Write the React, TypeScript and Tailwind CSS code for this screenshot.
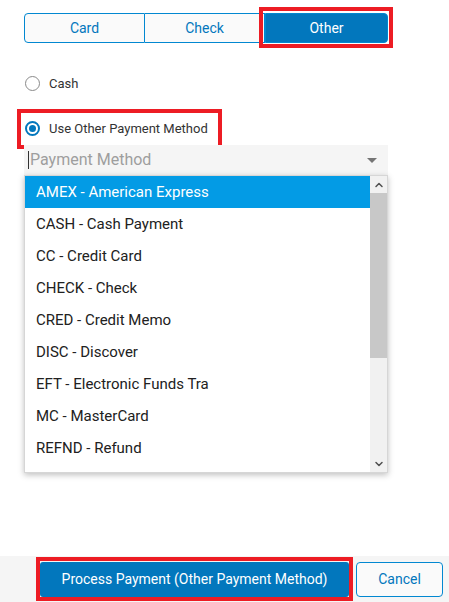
import { ChevronUp, ChevronDown } from 'lucide-react'

const methods = [
  'AMEX - American Express',
  'CASH - Cash Payment',
  'CC - Credit Card',
  'CHECK - Check',
  'CRED - Credit Memo',
  'DISC - Discover',
  'EFT - Electronic Funds Tra',
  'MC - MasterCard',
  'REFND - Refund',
  'TRANS - Transfer of Funds',
]

function Radio({ checked, label }: { checked?: boolean; label: string }) {
  return (
    <div className="flex items-center gap-[9px]">
      <span
        className={
          checked
            ? 'flex h-[15px] w-[15px] items-center justify-center rounded-full border-2 border-[#0277bd]'
            : 'h-[15px] w-[15px] rounded-full border-[1.5px] border-[#8a8a8a]'
        }
      >
        {checked && <span className="h-[7px] w-[7px] rounded-full bg-[#0277bd]" />}
      </span>
      <span className="text-[13px] text-[#333]">{label}</span>
    </div>
  )
}

export default function App() {
  return (
    <div className="flex min-h-[602px] flex-col bg-white font-['Roboto',sans-serif]">
      <main className="pl-[24px] pr-[61px] pt-[13px]">
        <div className="flex h-[30px]">
          <button className="w-[121px] rounded-l-[4px] border border-[#0288d1] bg-[#fafafa] text-[14px] text-[#0277bd]">
            Card
          </button>
          <button className="w-[120px] border-y border-r border-[#0288d1] bg-[#fafafa] text-[14px] text-[#0277bd]">
            Check
          </button>
          <div className="relative flex-1">
            <button className="h-full w-full rounded-r-[4px] border border-[#0288d1] bg-[#0277bd] text-[14px] text-white">
              Other
            </button>
            <div className="pointer-events-none absolute -bottom-[5px] -left-[6px] -right-[5px] -top-[6px] border-4 border-[#ed1c24]" />
          </div>
        </div>

        <div className="mt-[31px] flex flex-col gap-[25px] pl-[1px]">
          <Radio label="Cash" />
          <div className="relative w-fit pr-[10px]">
            <Radio checked label="Use Other Payment Method" />
            <div className="pointer-events-none absolute -bottom-[11px] -left-[8px] -right-[4px] -top-[10px] border-4 border-[#ed1c24]" />
          </div>
        </div>

        <div className="relative mt-[7px]">
          <div className="flex h-[30px] items-center justify-between bg-[#f5f5f5] pl-[4px] pr-[11px]">
            <span className="flex items-center text-[16px] text-[#9e9e9e]">
              <span className="mr-[1px] h-[18px] w-px bg-[#333]" />
              Payment Method
            </span>
            <span className="h-0 w-0 border-x-[5px] border-t-[5px] border-x-transparent border-t-[#757575]" />
          </div>

          <div className="absolute left-0 right-0 top-[30px] z-10 flex h-[298px] border border-[#d6d6d6] bg-white shadow-[0_2px_6px_rgba(0,0,0,0.25)]">
            <ul className="flex-1 overflow-hidden">
              {methods.map((m, i) => (
                <li
                  key={m}
                  className={
                    i === 0
                      ? 'flex h-[32px] shrink-0 items-center bg-[#039be5] pl-[11px] text-[15px] text-white'
                      : 'flex h-[32px] shrink-0 items-center pl-[11px] text-[15px] text-[#212121]'
                  }
                >
                  {m}
                </li>
              ))}
            </ul>
            <div className="flex w-[17px] flex-col bg-[#f1f1f1]">
              <div className="flex h-[17px] items-center justify-center">
                <ChevronUp size={12} strokeWidth={3} className="text-[#505050]" />
              </div>
              <div className="h-[165px] bg-[#c8c8c8]" />
              <div className="flex-1" />
              <div className="flex h-[17px] items-center justify-center">
                <ChevronDown size={12} strokeWidth={3} className="text-[#505050]" />
              </div>
            </div>
          </div>
        </div>
      </main>

      <footer className="mt-auto flex h-[46px] items-center justify-end gap-[7px] bg-[#f5f5f5] pr-[6px]">
        <div className="relative">
          <button className="h-[35px] w-[309px] rounded-[3px] bg-[#0277bd] text-[14px] text-white">
            Process Payment (Other Payment Method)
          </button>
          <div className="pointer-events-none absolute -bottom-[4px] -left-[4px] -right-[4px] -top-[5px] border-4 border-[#ed1c24]" />
        </div>
        <button className="h-[35px] w-[87px] rounded-[4px] border border-[#0288d1] bg-[#fafafa] text-[14px] text-[#0277bd]">
          Cancel
        </button>
      </footer>
    </div>
  )
}
